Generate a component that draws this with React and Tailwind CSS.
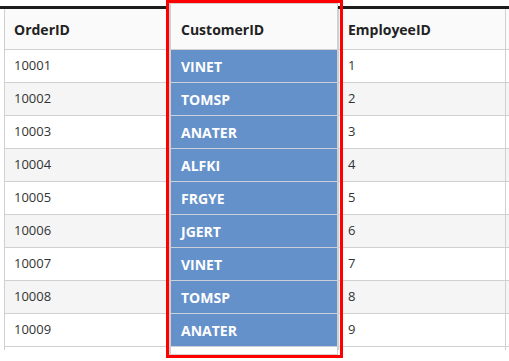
const orders = [
  { id: 10001, customer: 'VINET', employee: 1 },
  { id: 10002, customer: 'TOMSP', employee: 2 },
  { id: 10003, customer: 'ANATER', employee: 3 },
  { id: 10004, customer: 'ALFKI', employee: 4 },
  { id: 10005, customer: 'FRGYE', employee: 5 },
  { id: 10006, customer: 'JGERT', employee: 6 },
  { id: 10007, customer: 'VINET', employee: 7 },
  { id: 10008, customer: 'TOMSP', employee: 8 },
  { id: 10009, customer: 'ANATER', employee: 9 },
];

const font = { fontFamily: '"Open Sans", "Noto Sans", sans-serif' };

export default function App() {
  return (
    <div className="relative w-[509px] h-[361px] overflow-hidden bg-white text-[13px] text-[#333]" style={font}>
      <div className="h-[6px]" />
      <div className="h-[3px] bg-[#1c1c1c]" />

      {/* grid body */}
      <div className="ml-[4px] grid grid-cols-[166px_168px_167px_1fr]">
        <div className="h-[41px] border-l border-b border-[#d0d0d0] bg-[#fafafa] pl-[9px] flex items-center font-bold text-[14px] text-[#222]">OrderID</div>
        <div className="h-[41px] border-l border-b border-[#d0d0d0] bg-[#fafafa]" />
        <div className="h-[41px] border-l border-b border-[#d0d0d0] bg-[#fafafa] pl-[9px] flex items-center font-bold text-[14px] text-[#222]">EmployeeID</div>
        <div className="h-[41px] border-l border-b border-[#d0d0d0] bg-[#fafafa]" />

        {orders.map((o, i) => {
          const bg = i % 2 === 1 ? 'bg-[#f5f5f5]' : 'bg-white';
          return (
            <div key={o.id} className="contents">
              <div className={`h-[33px] border-l border-b border-[#d0d0d0] pl-[9px] flex items-center ${bg}`}>{o.id}</div>
              <div className={`h-[33px] border-l border-b border-[#d0d0d0] ${bg}`} />
              <div className={`h-[33px] border-l border-b border-[#d0d0d0] pl-[9px] flex items-center ${bg}`}>{o.employee}</div>
              <div className={`h-[33px] border-l border-b border-[#d0d0d0] ${bg}`} />
            </div>
          );
        })}

        <div className="h-[3px] border-l border-[#d0d0d0]" />
        <div className="h-[3px] border-l border-[#d0d0d0]" />
        <div className="h-[3px] border-l border-[#d0d0d0]" />
        <div className="h-[3px] border-l border-[#d0d0d0]" />
      </div>

      {/* selected CustomerID column, outlined */}
      <div className="absolute left-[166px] top-0 w-[177px] h-[358px] border-[3px] border-[#ff0000]">
        <div className="mr-[2px] h-full border-l-2 border-r border-t border-b border-[#d0d0d0] bg-white flex flex-col">
          <div className="h-[46px] shrink-0 border-b border-[#d0d0d0] bg-[#fafafa] pl-[10px] pt-[6px] flex items-center font-bold text-[14px] text-[#222]">CustomerID</div>
          {orders.map((o) => (
            <div key={o.id} className="h-[33px] shrink-0 border-b border-[#c9d0da] bg-[#6591cb] pl-[10px] flex items-center font-bold text-[14px] text-white">
              {o.customer}
            </div>
          ))}
        </div>
      </div>
    </div>
  );
}
